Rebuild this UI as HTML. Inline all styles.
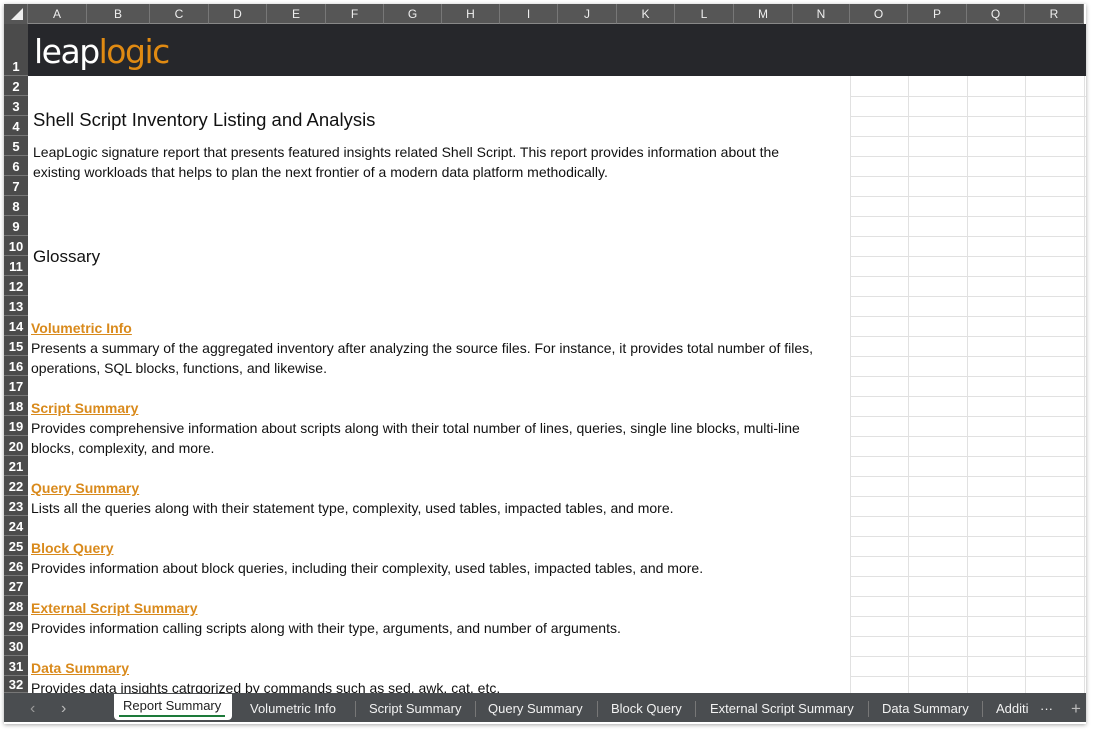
<!DOCTYPE html>
<html><head><meta charset="utf-8"><style>
*{margin:0;padding:0;box-sizing:border-box}
body{width:1096px;height:734px;background:#fff;position:relative;overflow:hidden;font-family:"Liberation Sans",sans-serif}
.frame{position:absolute;left:4px;top:4px;width:1082px;height:720px;background:#fff;box-shadow:0 1px 4px rgba(0,0,0,.35)}
.ch{position:absolute;top:4px;height:20px;background:#565656;color:#eee;font-size:12px;line-height:20px;text-align:center;border-right:1px solid #777;border-bottom:1px solid #888}
.rh{position:absolute;left:4px;width:24px;background:#4b4b4b;color:#fff;font-size:13px;font-weight:bold;text-align:center;border-bottom:1px solid #777;display:flex;align-items:flex-end;justify-content:center;padding-bottom:1px}
.t{position:absolute;left:31px;font-size:14px;color:#111;white-space:nowrap;line-height:20px}
.l{color:#d98a1c;font-weight:bold;text-decoration:underline}
.tab{position:absolute;top:696px;height:26px;line-height:26px;font-size:13px;color:#f2f2f2;white-space:nowrap}
.sep{position:absolute;top:701px;width:1px;height:16px;background:#777}
</style></head><body>
<div class="frame"></div>
<div style="position:absolute;left:4px;top:4px;width:24px;height:20px;background:#565656;border-right:1px solid #777"></div>
<svg style="position:absolute;left:10px;top:8px" width="14" height="13"><polygon points="13,0 13,12 1,12" fill="#eee"/></svg>
<div id="ch"></div>
<div style="position:absolute;left:28px;top:24px;width:1058px;height:52px;background:#26272b"></div>
<div style="position:absolute;left:34px;top:30px;font-size:33px;color:#fff;letter-spacing:-1.5px;font-family:'DejaVu Sans','Liberation Sans',sans-serif;line-height:44px">leap<span style="color:#e08a12">logic</span></div>
<svg style="position:absolute;left:850px;top:76px" width="236" height="617">
<g stroke="#e1e1e1" stroke-width="1">
<line x1="0.5" y1="0" x2="0.5" y2="617"/><line x1="58.5" y1="0" x2="58.5" y2="617"/><line x1="117.5" y1="0" x2="117.5" y2="617"/><line x1="175.5" y1="0" x2="175.5" y2="617"/><line x1="234.5" y1="0" x2="234.5" y2="617"/>
</g>
<g id="hl" stroke="#e1e1e1"></g>
</svg>
<div id="rh"></div>
<div class="t" style="top:108px;font-size:18.5px;left:33px;line-height:24px">Shell Script Inventory Listing and Analysis</div>
<div class="t" style="top:142px;left:33px">LeapLogic signature report that presents featured insights related Shell Script. This report provides information about the</div>
<div class="t" style="top:162px;left:33px">existing workloads that helps to plan the next frontier of a modern data platform methodically.</div>
<div class="t" style="top:245px;font-size:17px;left:33px;line-height:24px">Glossary</div>
<div class="t l" style="top:318px">Volumetric Info</div>
<div class="t" style="top:338px">Presents a summary of the aggregated inventory after analyzing the source files. For instance, it provides total number of files,</div>
<div class="t" style="top:358px">operations, SQL blocks, functions, and likewise.</div>
<div class="t l" style="top:398px">Script Summary</div>
<div class="t" style="top:418px">Provides comprehensive information about scripts along with their total number of lines, queries, single line blocks, multi-line</div>
<div class="t" style="top:438px">blocks, complexity, and more.</div>
<div class="t l" style="top:478px">Query Summary</div>
<div class="t" style="top:498px">Lists all the queries along with their statement type, complexity, used tables, impacted tables, and more.</div>
<div class="t l" style="top:538px">Block Query</div>
<div class="t" style="top:558px">Provides information about block queries, including their complexity, used tables, impacted tables, and more.</div>
<div class="t l" style="top:598px">External Script Summary</div>
<div class="t" style="top:618px">Provides information calling scripts along with their type, arguments, and number of arguments.</div>
<div class="t l" style="top:658px">Data Summary</div>
<div class="t" style="top:678px">Provides data insights catrgorized by commands such as sed, awk, cat, etc.</div>
<div style="position:absolute;left:4px;top:693px;width:1082px;height:29px;background:#4a4d50"></div>
<div class="tab" style="left:30px;color:#999;font-size:16px">&lsaquo;</div>
<div class="tab" style="left:61px;color:#bbb;font-size:16px">&rsaquo;</div>
<div style="position:absolute;left:114px;top:694px;width:118px;height:26px;background:#fff;border-radius:0 0 4px 4px"></div>
<div class="tab" style="left:123px;color:#222;top:693px">Report Summary</div>
<div style="position:absolute;left:119px;top:715px;width:106px;height:2px;background:#1d7a3a"></div>
<div class="tab" style="left:250px">Volumetric Info</div><div class="sep" style="left:355px"></div>
<div class="tab" style="left:369px">Script Summary</div><div class="sep" style="left:475px"></div>
<div class="tab" style="left:488px">Query Summary</div><div class="sep" style="left:597px"></div>
<div class="tab" style="left:611px">Block Query</div><div class="sep" style="left:695px"></div>
<div class="tab" style="left:710px">External Script Summary</div><div class="sep" style="left:868px"></div>
<div class="tab" style="left:882px">Data Summary</div><div class="sep" style="left:982px"></div>
<div class="tab" style="left:996px">Additi</div>
<div class="tab" style="left:1040px">&middot;&middot;&middot;</div>
<div class="tab" style="left:1071px;font-size:17px;color:#bbb">+</div>
<script>
var b=[28,87,150,209,267,326,384,442,500,558,617,675,734,793,850,908,967,1025,1084],L="ABCDEFGHIJKLMNOPQR",h="";
for(var i=0;i<18;i++)h+='<div class="ch" style="left:'+b[i]+'px;width:'+(b[i+1]-b[i])+'px">'+L[i]+'</div>';
document.getElementById('ch').innerHTML=h;
var r='<div class="rh" style="top:24px;height:52px">1</div>';
for(var n=2;n<=32;n++){var t=76+(n-2)*20;var hh=Math.min(20,693-t);r+='<div class="rh" style="top:'+t+'px;height:'+hh+'px;'+(hh<20?'align-items:flex-start;overflow:hidden;padding-top:1px':'')+'">'+n+'</div>';}
document.getElementById('rh').innerHTML=r;
var g="";for(var n=1;n<31;n++){var y=n*20+0.5;g+='<line x1="0" y1="'+y+'" x2="236" y2="'+y+'"/>';}
document.getElementById('hl').innerHTML=g;
</script>
</body></html>
